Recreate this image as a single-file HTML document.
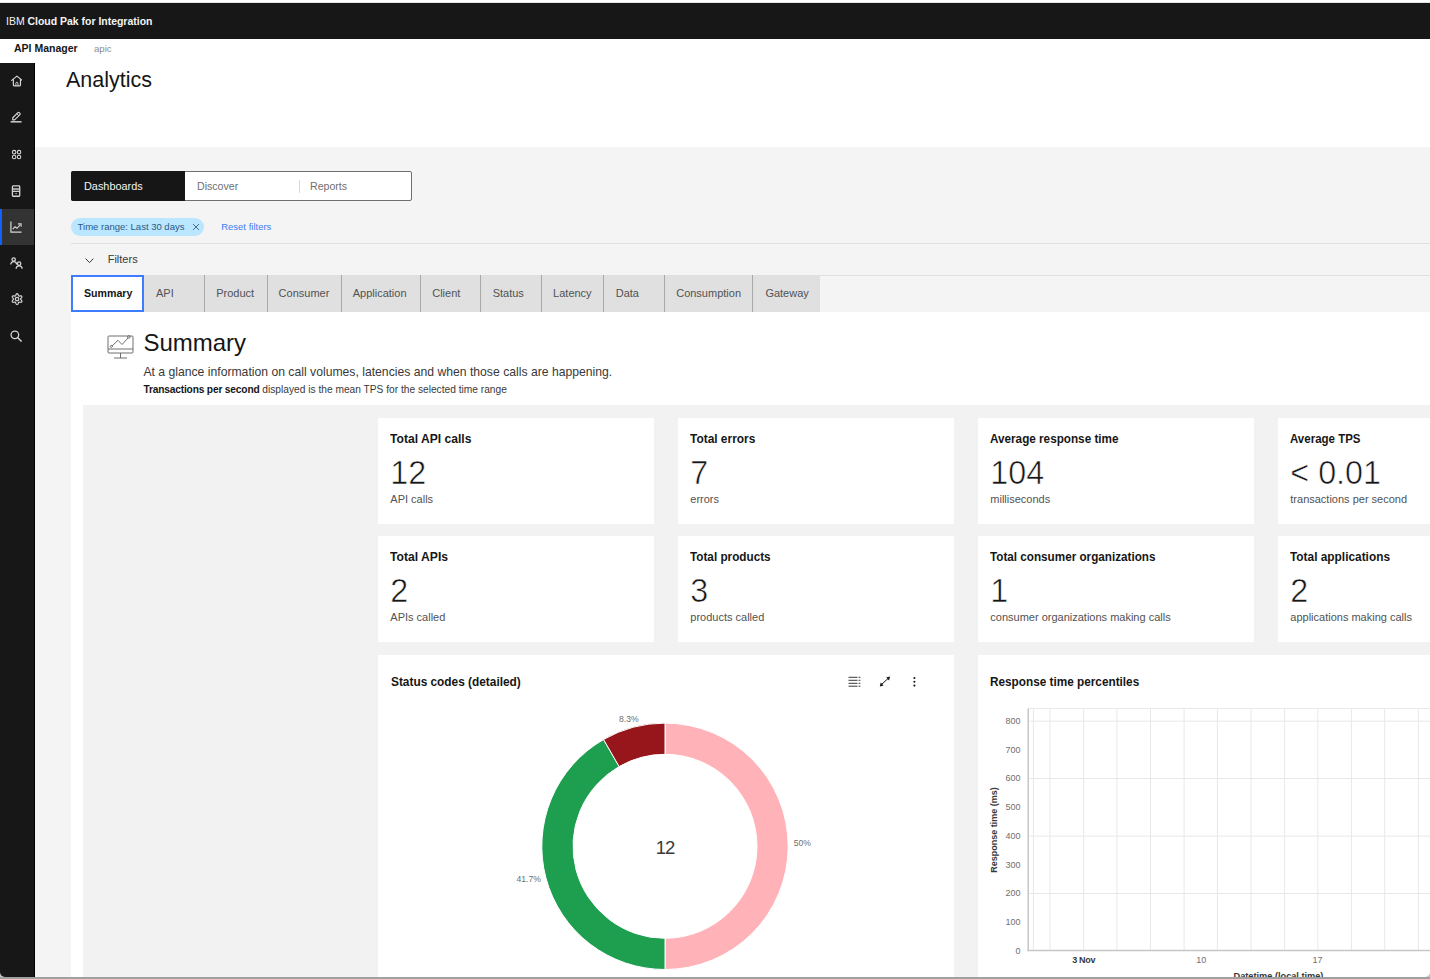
<!DOCTYPE html>
<html><head><meta charset="utf-8"><style>
html,body{margin:0;padding:0;width:1430px;height:979px;overflow:hidden;background:#fff;position:relative;font-family:'Liberation Sans', sans-serif}
.t{position:absolute;white-space:nowrap;line-height:1}
</style></head><body>
<div style="position:absolute;left:0px;top:2px;width:1430px;height:1px;background:#e4e4e4"></div>
<div style="position:absolute;left:0px;top:3px;width:1430px;height:36px;background:#171717"></div>
<div class="t" style="transform-origin:0 0;transform:scaleX(0.9870);left:5.6px;top:15.52px;font-size:10.6px;color:#f4f4f4;font-weight:bold"><span style="font-weight:normal">IBM</span> Cloud Pak for Integration</div>
<div class="t" style="left:14px;top:43.11px;font-size:10.5px;color:#161616;font-weight:bold">API Manager</div>
<div class="t" style="left:94px;top:43.87px;font-size:9.6px;color:#8d8d8d">apic</div>
<div style="position:absolute;left:0px;top:968px;width:8px;height:9px;background:#c4c4c4"></div>
<div style="position:absolute;left:0px;top:63px;width:35px;height:914px;background:#171717;border-bottom-left-radius:5px"></div>
<div style="position:absolute;left:34px;top:63px;width:1px;height:914px;background:#000"></div>
<div style="position:absolute;left:0px;top:208.5px;width:34px;height:36.5px;background:#333333"></div>
<div style="position:absolute;left:0px;top:208.5px;width:2px;height:36.5px;background:#0f62fe"></div>
<div class="t" style="transform-origin:0 0;transform:scaleX(0.9951);left:65.8px;top:69.01px;font-size:21.6px;color:#161616">Analytics</div>
<div style="position:absolute;left:35px;top:147px;width:1395px;height:830px;background:#f4f4f4"></div>
<div style="position:absolute;left:71px;top:171px;width:340.5px;height:30px;background:#fff;border:1px solid #6f6f6f;box-sizing:border-box;border-radius:2px"></div>
<div style="position:absolute;left:71px;top:171px;width:113.7px;height:30px;background:#161616;border-radius:2px 0 0 2px"></div>
<div style="position:absolute;left:298.5px;top:180px;width:1px;height:12.5px;background:#d8d8d8"></div>
<div class="t" style="transform-origin:0 0;transform:scaleX(0.9894);left:83.5px;top:180.59px;font-size:11px;color:#f4f4f4">Dashboards</div>
<div class="t" style="left:197px;top:180.92px;font-size:10.6px;color:#6f6f6f">Discover</div>
<div class="t" style="left:310px;top:180.92px;font-size:10.6px;color:#6f6f6f">Reports</div>
<div style="position:absolute;left:71.2px;top:217.8px;width:133px;height:18px;background:#bae6ff;border-radius:9px"></div>
<div class="t" style="left:77.6px;top:221.56px;font-size:9.5px;color:#2c5a85">Time range: Last 30 days</div>
<div class="t" style="left:221.2px;top:221.56px;font-size:9.5px;color:#3c7cf4">Reset filters</div>
<svg style="position:absolute;left:191.5px;top:223px" width="8" height="8" viewBox="0 0 8 8"><path d="M1 1L7 7M7 1L1 7" stroke="#3a5f80" stroke-width="0.9"/></svg>
<div style="position:absolute;left:71px;top:243.2px;width:1359px;height:1px;background:#e0e0e0"></div>
<svg style="position:absolute;left:85px;top:257.8px" width="9" height="6" viewBox="0 0 9 6"><path d="M0.6 0.6L4.5 4.6L8.4 0.6" fill="none" stroke="#393939" stroke-width="1"/></svg>
<div class="t" style="left:107.7px;top:253.89px;font-size:11px;color:#393939">Filters</div>
<div style="position:absolute;left:71px;top:275.2px;width:1359px;height:1px;background:#e0e0e0"></div>
<div style="position:absolute;left:71px;top:275.2px;width:749px;height:36.6px;background:#e0e0e0"></div>
<div class="t" style="left:156px;top:287.69px;font-size:11px;color:#525252">API</div>
<div style="position:absolute;left:204.2px;top:275.2px;width:1px;height:36.6px;background:#a8a8a8"></div>
<div class="t" style="left:216.2px;top:287.69px;font-size:11px;color:#525252">Product</div>
<div style="position:absolute;left:266.5px;top:275.2px;width:1px;height:36.6px;background:#a8a8a8"></div>
<div class="t" style="left:278.6px;top:287.69px;font-size:11px;color:#525252">Consumer</div>
<div style="position:absolute;left:340.7px;top:275.2px;width:1px;height:36.6px;background:#a8a8a8"></div>
<div class="t" style="left:352.7px;top:287.69px;font-size:11px;color:#525252">Application</div>
<div style="position:absolute;left:419.9px;top:275.2px;width:1px;height:36.6px;background:#a8a8a8"></div>
<div class="t" style="left:432.2px;top:287.69px;font-size:11px;color:#525252">Client</div>
<div style="position:absolute;left:480.4px;top:275.2px;width:1px;height:36.6px;background:#a8a8a8"></div>
<div class="t" style="left:492.7px;top:287.69px;font-size:11px;color:#525252">Status</div>
<div style="position:absolute;left:541.3px;top:275.2px;width:1px;height:36.6px;background:#a8a8a8"></div>
<div class="t" style="left:553.1px;top:287.69px;font-size:11px;color:#525252">Latency</div>
<div style="position:absolute;left:603.1px;top:275.2px;width:1px;height:36.6px;background:#a8a8a8"></div>
<div class="t" style="left:615.7px;top:287.69px;font-size:11px;color:#525252">Data</div>
<div style="position:absolute;left:664px;top:275.2px;width:1px;height:36.6px;background:#a8a8a8"></div>
<div class="t" style="left:676.2px;top:287.69px;font-size:11px;color:#525252">Consumption</div>
<div style="position:absolute;left:752.4px;top:275.2px;width:1px;height:36.6px;background:#a8a8a8"></div>
<div class="t" style="left:765.4px;top:287.69px;font-size:11px;color:#525252">Gateway</div>
<div style="position:absolute;left:71px;top:311.6px;width:1359px;height:666px;background:#fff"></div>
<div style="position:absolute;left:71px;top:275.2px;width:72.8px;height:36.6px;background:#fff;border:2px solid #3d7bff;box-sizing:border-box"></div>
<div class="t" style="transform-origin:0 0;transform:scaleX(0.9653);left:83.6px;top:287.69px;font-size:11px;color:#161616;font-weight:bold">Summary</div>
<div class="t" style="left:143.4px;top:331.18px;font-size:24px;color:#161616">Summary</div>
<div class="t" style="left:143.4px;top:365.67px;font-size:12.2px;color:#393939">At a glance information on call volumes, latencies and when those calls are happening.</div>
<div class="t" style="left:143.4px;top:384.76px;font-size:10.2px;color:#393939"><b style="color:#161616;letter-spacing:-0.17px">Transactions per second</b> displayed is the mean TPS for the selected time range</div>
<svg style="position:absolute;left:107px;top:334px" width="28" height="26" viewBox="0 0 28 26" fill="none" stroke="#6f6f6f" stroke-width="1">
<rect x="1" y="2" width="25" height="17" rx="1"/><line x1="1" y1="15" x2="26" y2="15"/><line x1="13.5" y1="19" x2="13.5" y2="24"/><line x1="7" y1="24" x2="20" y2="24"/>
<polyline points="5,12 11,6.3 15,10.5 21,4"/><circle cx="4.4" cy="12.4" r="1"/><circle cx="21.8" cy="2.9" r="1.3"/></svg>
<div style="position:absolute;left:83px;top:405.4px;width:1347px;height:572px;background:#f2f2f2"></div>
<div style="position:absolute;left:378px;top:417.5px;width:275.7px;height:106.2px;background:#fff"></div>
<div class="t" style="transform-origin:0 0;transform:scaleX(0.9040);left:390.3px;top:432.25px;font-size:13.4px;color:#161616;font-weight:bold">Total API calls</div>
<div class="t" style="left:390.3px;top:457.05px;font-size:32.3px;color:#161616;-webkit-text-stroke:0.6px #fff">12</div>
<div class="t" style="left:390.3px;top:493.89px;font-size:11px;color:#525252">API calls</div>
<div style="position:absolute;left:678px;top:417.5px;width:275.7px;height:106.2px;background:#fff"></div>
<div class="t" style="transform-origin:0 0;transform:scaleX(0.8894);left:690.3px;top:432.25px;font-size:13.4px;color:#161616;font-weight:bold">Total errors</div>
<div class="t" style="left:690.3px;top:457.05px;font-size:32.3px;color:#161616;-webkit-text-stroke:0.6px #fff">7</div>
<div class="t" style="left:690.3px;top:493.89px;font-size:11px;color:#525252">errors</div>
<div style="position:absolute;left:978px;top:417.5px;width:275.7px;height:106.2px;background:#fff"></div>
<div class="t" style="transform-origin:0 0;transform:scaleX(0.8749);left:990.3px;top:432.25px;font-size:13.4px;color:#161616;font-weight:bold">Average response time</div>
<div class="t" style="left:990.3px;top:457.05px;font-size:32.3px;color:#161616;-webkit-text-stroke:0.6px #fff">104</div>
<div class="t" style="left:990.3px;top:493.89px;font-size:11px;color:#525252">milliseconds</div>
<div style="position:absolute;left:1278px;top:417.5px;width:275.7px;height:106.2px;background:#fff"></div>
<div class="t" style="transform-origin:0 0;transform:scaleX(0.8584);left:1290.3px;top:432.25px;font-size:13.4px;color:#161616;font-weight:bold">Average TPS</div>
<div class="t" style="left:1290.3px;top:457.05px;font-size:32.3px;color:#161616;-webkit-text-stroke:0.6px #fff">&lt; 0.01</div>
<div class="t" style="left:1290.3px;top:493.89px;font-size:11px;color:#525252">transactions per second</div>
<div style="position:absolute;left:378px;top:535.7px;width:275.7px;height:106.2px;background:#fff"></div>
<div class="t" style="transform-origin:0 0;transform:scaleX(0.9065);left:390.3px;top:550.45px;font-size:13.4px;color:#161616;font-weight:bold">Total APIs</div>
<div class="t" style="left:390.3px;top:575.25px;font-size:32.3px;color:#161616;-webkit-text-stroke:0.6px #fff">2</div>
<div class="t" style="left:390.3px;top:612.09px;font-size:11px;color:#525252">APIs called</div>
<div style="position:absolute;left:678px;top:535.7px;width:275.7px;height:106.2px;background:#fff"></div>
<div class="t" style="transform-origin:0 0;transform:scaleX(0.8761);left:690.3px;top:550.45px;font-size:13.4px;color:#161616;font-weight:bold">Total products</div>
<div class="t" style="left:690.3px;top:575.25px;font-size:32.3px;color:#161616;-webkit-text-stroke:0.6px #fff">3</div>
<div class="t" style="left:690.3px;top:612.09px;font-size:11px;color:#525252">products called</div>
<div style="position:absolute;left:978px;top:535.7px;width:275.7px;height:106.2px;background:#fff"></div>
<div class="t" style="transform-origin:0 0;transform:scaleX(0.8734);left:990.3px;top:550.45px;font-size:13.4px;color:#161616;font-weight:bold">Total consumer organizations</div>
<div class="t" style="left:990.3px;top:575.25px;font-size:32.3px;color:#161616;-webkit-text-stroke:0.6px #fff">1</div>
<div class="t" style="left:990.3px;top:612.09px;font-size:11px;color:#525252">consumer organizations making calls</div>
<div style="position:absolute;left:1278px;top:535.7px;width:275.7px;height:106.2px;background:#fff"></div>
<div class="t" style="transform-origin:0 0;transform:scaleX(0.8862);left:1290.3px;top:550.45px;font-size:13.4px;color:#161616;font-weight:bold">Total applications</div>
<div class="t" style="left:1290.3px;top:575.25px;font-size:32.3px;color:#161616;-webkit-text-stroke:0.6px #fff">2</div>
<div class="t" style="left:1290.3px;top:612.09px;font-size:11px;color:#525252">applications making calls</div>
<div style="position:absolute;left:378px;top:654.6px;width:575.7px;height:323px;background:#fff"></div>
<div style="position:absolute;left:978px;top:654.6px;width:452px;height:323px;background:#fff"></div>
<div class="t" style="transform-origin:0 0;transform:scaleX(0.8854);left:390.6px;top:674.85px;font-size:13.4px;color:#161616;font-weight:bold">Status codes (detailed)</div>
<div class="t" style="transform-origin:0 0;transform:scaleX(0.8793);left:990.3px;top:674.85px;font-size:13.4px;color:#161616;font-weight:bold">Response time percentiles</div>
<svg style="position:absolute;left:10.58px;top:75.38px" width="11.84" height="11.84" viewBox="0 0 16 16"><path d="M1 7.3L8 1.5l7 5.8" fill="none" stroke="#d6d6d6" stroke-width="1.6" stroke-linejoin="round" stroke-linecap="round"/><path d="M3.2 5.8V13.6a1 1 0 0 0 1 1h7.6a1 1 0 0 0 1-1V5.8" fill="none" stroke="#d6d6d6" stroke-width="1.6"/><path d="M6.6 14.4V11.2a1.4 1.4 0 0 1 2.8 0v3.2" fill="none" stroke="#d6d6d6" stroke-width="1.3"/></svg>
<svg style="position:absolute;left:10.42px;top:111.42px" width="12.16" height="12.16" viewBox="0 0 16 16"><rect x="0.8" y="13.3" width="14.4" height="1.9" fill="#d6d6d6"/><path d="M3.6 11.2V8.9l6.8-6.8c.5-.5 1.2-.5 1.7 0l1 1c.5.5.5 1.2 0 1.7L6.1 11.6H3.6z" fill="none" stroke="#d6d6d6" stroke-width="1.5" stroke-linejoin="round"/><path d="M9 3.6l2.6 2.6" stroke="#d6d6d6" stroke-width="1.3"/></svg>
<svg style="position:absolute;left:10.90px;top:149.00px" width="11.20" height="11.20" viewBox="0 0 16 16"><g fill="none" stroke="#d6d6d6" stroke-width="1.5"><circle cx="4.5" cy="4.5" r="2.5"/><circle cx="11.5" cy="4.5" r="2.5"/><circle cx="4.5" cy="11.5" r="2.5"/><circle cx="11.5" cy="11.5" r="2.5"/></g></svg>
<svg style="position:absolute;left:10.22px;top:184.52px" width="12.16" height="12.16" viewBox="0 0 16 16"><rect x="3.2" y="1.2" width="9.6" height="13.6" rx="1" fill="none" stroke="#d6d6d6" stroke-width="1.7"/><rect x="3.6" y="3.9" width="8.8" height="3" fill="#d6d6d6" opacity="0.7"/><line x1="3.2" y1="8.4" x2="12.8" y2="8.4" stroke="#d6d6d6" stroke-width="1.5"/><rect x="7.2" y="10.6" width="1.6" height="1.4" fill="#d6d6d6"/></svg>
<svg style="position:absolute;left:10.42px;top:220.72px" width="12.16" height="12.16" viewBox="0 0 16 16"><path d="M1.2 0.8V14.6H15.2" fill="none" stroke="#d6d6d6" stroke-width="1.6"/><path d="M3.6 10.6L6.6 7.6L9.2 9.6L13.6 4.8" fill="none" stroke="#d6d6d6" stroke-width="1.4"/><path d="M10.6 3.8H14.6V7.6" fill="none" stroke="#d6d6d6" stroke-width="1.4"/></svg>
<svg style="position:absolute;left:10.20px;top:256.50px" width="12.80" height="12.80" viewBox="0 0 16 16"><g fill="none" stroke="#d6d6d6" stroke-width="1.6"><circle cx="4.6" cy="3.1" r="2.1"/><path d="M0.9 9.4c0-2.1 1.6-3.6 3.7-3.6s3.7 1.5 3.7 3.6"/><circle cx="11.4" cy="8.3" r="2.1"/><path d="M7.7 14.6c0-2.1 1.6-3.6 3.7-3.6s3.7 1.5 3.7 3.6"/></g></svg>
<svg style="position:absolute;left:10.62px;top:293.32px" width="12.16" height="12.16" viewBox="0 0 16 16"><polygon points="8.00,0.85 8.37,0.92 8.72,1.13 9.04,1.45 9.31,1.85 9.53,2.30 9.70,2.76 9.85,3.18 9.99,3.53 10.14,3.80 10.32,3.97 10.57,4.05 10.87,4.04 11.25,3.99 11.69,3.90 12.17,3.83 12.67,3.79 13.16,3.82 13.59,3.94 13.95,4.14 14.19,4.42 14.32,4.78 14.31,5.19 14.19,5.62 13.98,6.06 13.70,6.47 13.39,6.85 13.10,7.19 12.86,7.49 12.70,7.75 12.65,8.00 12.70,8.25 12.86,8.51 13.10,8.81 13.39,9.15 13.70,9.53 13.98,9.94 14.19,10.38 14.31,10.81 14.32,11.22 14.19,11.57 13.95,11.86 13.59,12.06 13.16,12.18 12.67,12.21 12.17,12.17 11.69,12.10 11.25,12.01 10.87,11.96 10.57,11.95 10.32,12.03 10.14,12.20 9.99,12.47 9.85,12.82 9.70,13.24 9.53,13.70 9.31,14.15 9.04,14.55 8.72,14.87 8.37,15.08 8.00,15.15 7.63,15.08 7.28,14.87 6.96,14.55 6.69,14.15 6.47,13.70 6.30,13.24 6.15,12.82 6.01,12.47 5.86,12.20 5.68,12.03 5.43,11.95 5.13,11.96 4.75,12.01 4.31,12.10 3.83,12.17 3.33,12.21 2.84,12.18 2.41,12.06 2.05,11.86 1.81,11.58 1.68,11.22 1.69,10.81 1.81,10.38 2.02,9.94 2.30,9.53 2.61,9.15 2.90,8.81 3.14,8.51 3.30,8.25 3.35,8.00 3.30,7.75 3.14,7.49 2.90,7.19 2.61,6.85 2.30,6.47 2.02,6.06 1.81,5.62 1.69,5.19 1.68,4.78 1.81,4.42 2.05,4.14 2.41,3.94 2.84,3.82 3.33,3.79 3.83,3.83 4.31,3.90 4.75,3.99 5.13,4.04 5.43,4.05 5.68,3.97 5.86,3.80 6.01,3.53 6.15,3.18 6.30,2.76 6.47,2.30 6.69,1.85 6.96,1.45 7.28,1.13 7.63,0.92" fill="none" stroke="#d6d6d6" stroke-width="1.6" stroke-linejoin="round"/><circle cx="8" cy="8" r="2.3" fill="none" stroke="#d6d6d6" stroke-width="1.6"/></svg>
<svg style="position:absolute;left:10.42px;top:329.52px" width="12.16" height="12.16" viewBox="0 0 16 16"><circle cx="6.4" cy="6.4" r="5" fill="none" stroke="#d6d6d6" stroke-width="1.7"/><path d="M10 10L15.2 15.2" stroke="#d6d6d6" stroke-width="1.8"/></svg>
<svg style="position:absolute;left:847.5px;top:676px" width="13" height="11" viewBox="0 0 13 11"><g stroke="#393939" stroke-width="1"><path d="M0.5 1.3H9.5M0.5 4.3H9.5M0.5 7.3H9.5M0.5 10.2H9.5M10.6 1.3H12.4M10.6 4.3H12.4M10.6 7.3H12.4M10.6 10.2H12.4"/></g></svg>
<svg style="position:absolute;left:878.5px;top:676px" width="12" height="11" viewBox="0 0 12 11"><path d="M2.6 8.4L9.2 2.4" stroke="#161616" stroke-width="1"/><path d="M11 0.6L7.2 1.5L10.1 4.4z M0.8 10.4L1.7 6.6L4.6 9.5z" fill="#161616"/></svg>
<svg style="position:absolute;left:912px;top:676px" width="5" height="12" viewBox="0 0 5 12"><g fill="#161616"><circle cx="2.4" cy="2" r="1.05"/><circle cx="2.4" cy="5.8" r="1.05"/><circle cx="2.4" cy="9.6" r="1.05"/></g></svg>
<svg style="position:absolute;left:0;top:0" width="1430" height="979"><path d="M665.00 723.10A123.2 123.2 0 0 1 665.00 969.50L665.00 938.30A92 92 0 0 0 665.00 754.30Z" fill="#ffb3b8" stroke="#fff" stroke-width="1"/><path d="M665.00 969.50A123.2 123.2 0 0 1 603.59 739.50L619.14 766.55A92 92 0 0 0 665.00 938.30Z" fill="#1e9e4f" stroke="#fff" stroke-width="1"/><path d="M603.59 739.50A123.2 123.2 0 0 1 665.00 723.10L665.00 754.30A92 92 0 0 0 619.14 766.55Z" fill="#96161c" stroke="#fff" stroke-width="1"/></svg>
<div class="t" style="left:665px;transform:translateX(-50%);top:838.74px;font-size:18.5px;color:#393939;letter-spacing:-1px">12</div>
<div class="t" style="left:619px;top:715.22px;font-size:8.6px;color:#6f6f6f">8.3%</div>
<div class="t" style="left:793.7px;top:838.92px;font-size:8.6px;color:#6f6f6f">50%</div>
<div class="t" style="left:516.5px;top:875.22px;font-size:8.6px;color:#6f6f6f">41.7%</div>
<svg style="position:absolute;left:0;top:0" width="1430" height="979"><line x1="1028" y1="708.5" x2="1430" y2="708.5" stroke="#e8e8e8" stroke-width="1"/><line x1="1028" y1="721.2" x2="1430" y2="721.2" stroke="#e8e8e8" stroke-width="1"/><line x1="1028" y1="778.5" x2="1430" y2="778.5" stroke="#e8e8e8" stroke-width="1"/><line x1="1028" y1="836.1" x2="1430" y2="836.1" stroke="#e8e8e8" stroke-width="1"/><line x1="1028" y1="893.5" x2="1430" y2="893.5" stroke="#e8e8e8" stroke-width="1"/><line x1="1033.4" y1="708.5" x2="1033.4" y2="950.5" stroke="#e8e8e8" stroke-width="1"/><line x1="1050" y1="708.5" x2="1050" y2="950.5" stroke="#e8e8e8" stroke-width="1"/><line x1="1083.7" y1="708.5" x2="1083.7" y2="950.5" stroke="#e8e8e8" stroke-width="1"/><line x1="1116.9" y1="708.5" x2="1116.9" y2="950.5" stroke="#e8e8e8" stroke-width="1"/><line x1="1150.5" y1="708.5" x2="1150.5" y2="950.5" stroke="#e8e8e8" stroke-width="1"/><line x1="1184.1" y1="708.5" x2="1184.1" y2="950.5" stroke="#e8e8e8" stroke-width="1"/><line x1="1217.4" y1="708.5" x2="1217.4" y2="950.5" stroke="#e8e8e8" stroke-width="1"/><line x1="1251" y1="708.5" x2="1251" y2="950.5" stroke="#e8e8e8" stroke-width="1"/><line x1="1284.6" y1="708.5" x2="1284.6" y2="950.5" stroke="#e8e8e8" stroke-width="1"/><line x1="1317.8" y1="708.5" x2="1317.8" y2="950.5" stroke="#e8e8e8" stroke-width="1"/><line x1="1351.4" y1="708.5" x2="1351.4" y2="950.5" stroke="#e8e8e8" stroke-width="1"/><line x1="1384.7" y1="708.5" x2="1384.7" y2="950.5" stroke="#e8e8e8" stroke-width="1"/><line x1="1418.3" y1="708.5" x2="1418.3" y2="950.5" stroke="#e8e8e8" stroke-width="1"/><line x1="1028.2" y1="708.5" x2="1028.2" y2="951.2" stroke="#c6c6c6" stroke-width="1.5"/><line x1="1027.5" y1="950.5" x2="1430" y2="950.5" stroke="#c6c6c6" stroke-width="1.5"/></svg>
<div class="t" style="right:409.5px;top:716.88px;font-size:9px;color:#6f6f6f">800</div>
<div class="t" style="right:409.5px;top:745.61px;font-size:9px;color:#6f6f6f">700</div>
<div class="t" style="right:409.5px;top:774.34px;font-size:9px;color:#6f6f6f">600</div>
<div class="t" style="right:409.5px;top:803.07px;font-size:9px;color:#6f6f6f">500</div>
<div class="t" style="right:409.5px;top:831.80px;font-size:9px;color:#6f6f6f">400</div>
<div class="t" style="right:409.5px;top:860.53px;font-size:9px;color:#6f6f6f">300</div>
<div class="t" style="right:409.5px;top:889.26px;font-size:9px;color:#6f6f6f">200</div>
<div class="t" style="right:409.5px;top:917.99px;font-size:9px;color:#6f6f6f">100</div>
<div class="t" style="right:409.5px;top:946.72px;font-size:9px;color:#6f6f6f">0</div>
<div class="t" style="left:1083.7px;transform:translateX(-50%);top:956.38px;font-size:9px;color:#393939;font-weight:bold;letter-spacing:-0.3px">3 Nov</div>
<div class="t" style="left:1201.2px;transform:translateX(-50%);top:956.38px;font-size:9px;color:#6f6f6f">10</div>
<div class="t" style="left:1317.6px;transform:translateX(-50%);top:956.38px;font-size:9px;color:#6f6f6f">17</div>
<div class="t" style="left:1278.5px;transform:translateX(-50%);top:971.71px;font-size:9.2px;color:#393939;font-weight:bold">Datetime (local time)</div>
<div class="t" style="left:994px;top:829.5px;font-size:9px;font-weight:bold;color:#393939;transform:translate(-50%,-50%) rotate(-90deg)">Response time (ms)</div>
<svg style="position:absolute;left:1425px;top:972px" width="5" height="5" viewBox="0 0 5 5"><path d="M5 0V5H0A5 5 0 0 0 5 0z" fill="#c4c4c4"/></svg>
<div style="position:absolute;left:0px;top:977px;width:1430px;height:2px;background:#a0a0a0"></div>
</body></html>
